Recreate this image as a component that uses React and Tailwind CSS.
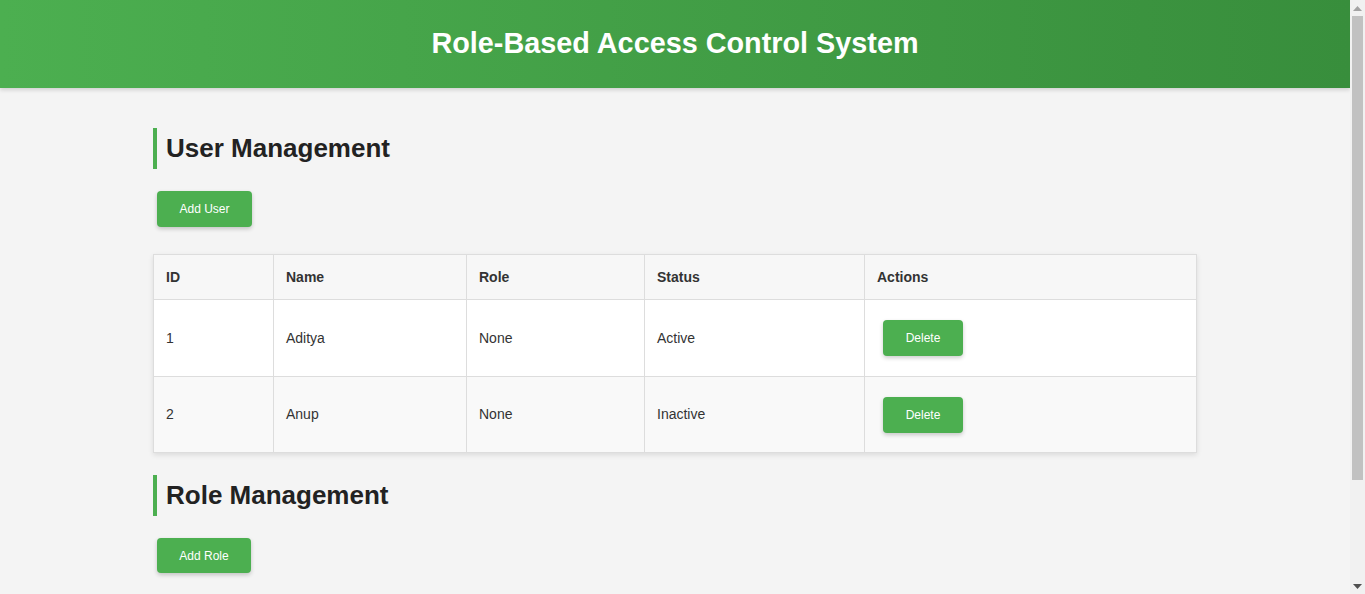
const users = [
  { id: 1, name: 'Aditya', role: 'None', status: 'Active' },
  { id: 2, name: 'Anup', role: 'None', status: 'Inactive' },
]

function SectionTitle({ children }) {
  return (
    <h2 className="border-l-4 border-[#4caf50] pl-[9px] py-[5px] text-[26px] leading-[31px] font-bold text-[#222]">
      {children}
    </h2>
  )
}

function GreenButton({ children, className = '' }) {
  return (
    <button className={`h-9 rounded bg-[#4caf50] px-[22px] text-[12px] text-white shadow-[0_2px_4px_rgba(0,0,0,0.2)] ${className}`}>
      {children}
    </button>
  )
}

// browser scrollbar as seen in the screenshot
function Scrollbar() {
  return (
    <div className="w-[15px] h-[594px] shrink-0 flex flex-col bg-[#f1f1f1]">
      <div className="h-4 flex items-center justify-center">
        <svg width="9" height="5" viewBox="0 0 9 5"><path d="M4.5 0L9 5H0z" fill="#a3a3a3" /></svg>
      </div>
      <div className="mx-[2px] h-[464px] bg-[#c1c1c1]" />
      <div className="flex-1" />
      <div className="h-4 flex items-center justify-center">
        <svg width="9" height="5" viewBox="0 0 9 5"><path d="M0 0H9L4.5 5z" fill="#505050" /></svg>
      </div>
    </div>
  )
}

export default function App() {
  return (
    <div className="flex h-[594px] overflow-hidden bg-[#f4f4f4] font-['Liberation_Sans',Arial,sans-serif] text-[#333]">
      <div className="flex-1 min-w-0">
        <header className="h-[88px] flex items-center justify-center bg-gradient-to-r from-[#4caf50] to-[#388e3c] shadow-[0_2px_4px_rgba(0,0,0,0.15)]">
          <h1 className="text-[28.8px] font-bold text-white">Role-Based Access Control System</h1>
        </header>

        <main className="w-[1044px] mx-auto pt-10 pb-[146px]">
          <SectionTitle>User Management</SectionTitle>
          <div className="mt-[22px] ml-1">
            <GreenButton className="w-[95px]">Add User</GreenButton>
          </div>

          <table className="mt-[27px] w-full border-collapse border border-[#ddd] bg-white text-[14px] shadow-[0_2px_5px_rgba(0,0,0,0.1)]">
            <thead>
              <tr className="h-[45px] bg-[#f7f7f7] text-left">
                <th className="w-[120px] border border-[#ddd] px-3 font-bold">ID</th>
                <th className="w-[193px] border border-[#ddd] px-3 font-bold">Name</th>
                <th className="w-[178px] border border-[#ddd] px-3 font-bold">Role</th>
                <th className="w-[220px] border border-[#ddd] px-3 font-bold">Status</th>
                <th className="border border-[#ddd] px-3 font-bold">Actions</th>
              </tr>
            </thead>
            <tbody>
              {users.map((u, i) => (
                <tr key={u.id} className={i % 2 ? 'h-[76px] bg-[#f9f9f9]' : 'h-[77px] bg-white'}>
                  <td className="border border-[#ddd] px-3">{u.id}</td>
                  <td className="border border-[#ddd] px-3">{u.name}</td>
                  <td className="border border-[#ddd] px-3">{u.role}</td>
                  <td className="border border-[#ddd] px-3">{u.status}</td>
                  <td className="border border-[#ddd] px-[18px]">
                    <GreenButton className="w-20 px-0">Delete</GreenButton>
                  </td>
                </tr>
              ))}
            </tbody>
          </table>

          <div className="mt-[22px]">
            <SectionTitle>Role Management</SectionTitle>
          </div>
          <div className="mt-[22px] ml-1">
            <GreenButton className="w-[94px] h-[35px]">Add Role</GreenButton>
          </div>
        </main>
      </div>
      <Scrollbar />
    </div>
  )
}
